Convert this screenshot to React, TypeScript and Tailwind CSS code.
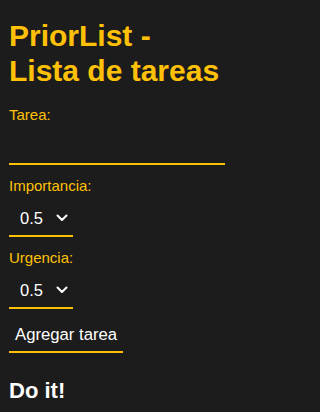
import React from "react";

function Chevron() {
  return (
    <svg width="12" height="8" viewBox="0 0 12 8" className="pointer-events-none shrink-0" aria-hidden="true">
      <path d="M1.5 1.5 L6 6 L10.5 1.5" fill="none" stroke="#ffffff" strokeWidth="2" strokeLinecap="round" strokeLinejoin="round" />
    </svg>
  );
}

function PrioritySelect({ id }: { id: string }) {
  return (
    <div className="mt-[7px] flex h-[36px] w-[64px] items-center border-b-2 border-[#ffc107] pl-[11px] pr-[5px]">
      <select
        id={id}
        defaultValue="0.5"
        className="w-[36px] appearance-none bg-transparent p-0 text-[16.5px] leading-[19px] text-white outline-none"
      >
        <option value="0.1">0.1</option>
        <option value="0.5">0.5</option>
        <option value="1">1</option>
      </select>
      <Chevron />
    </div>
  );
}

export default function App() {
  return (
    <div
      className="min-h-screen w-full bg-[#1c1c1c]"
      style={{ fontFamily: '"Liberation Sans", Arial, sans-serif' }}
    >
      <div className="w-[233px] pl-[9px] pr-[8px] pt-[18px]">
        <h1 className="text-[30px] font-bold leading-[35px] text-[#ffc107]">
          PriorList -<br />Lista de tareas
        </h1>

        <label htmlFor="tarea" className="mt-[18px] block text-[15px] leading-[17px] text-[#ffc107]">
          Tarea:
        </label>
        <input
          id="tarea"
          type="text"
          className="mt-[8px] block h-[34px] w-full border-b-2 border-[#ffc107] bg-transparent text-[16px] text-white outline-none"
        />

        <label htmlFor="imp" className="mt-[12px] block text-[15px] leading-[17px] text-[#ffc107]">
          Importancia:
        </label>
        <PrioritySelect id="imp" />

        <label htmlFor="urg" className="mt-[12px] block text-[15px] leading-[17px] text-[#ffc107]">
          Urgencia:
        </label>
        <PrioritySelect id="urg" />

        <button
          type="button"
          className="mt-[9px] flex h-[35px] w-[114px] items-center whitespace-nowrap border-b-2 border-[#ffc107] bg-transparent pl-[6px] pr-0 text-[16.7px] leading-[19px] text-white"
        >
          Agregar tarea
        </button>

        <h2 className="mt-[25px] text-[22px] font-bold leading-[25px] text-white">Do it!</h2>
      </div>
    </div>
  );
}
